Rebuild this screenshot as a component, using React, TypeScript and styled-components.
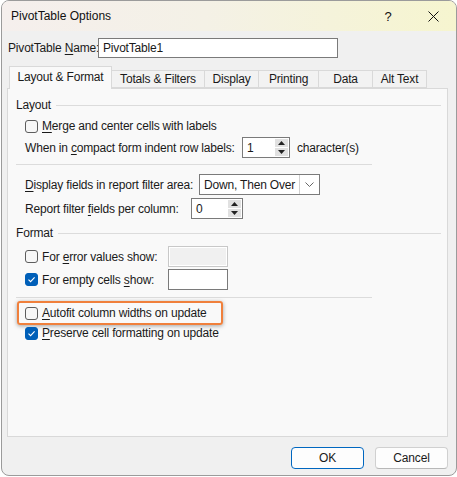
import styled, { createGlobalStyle } from "styled-components";

const GlobalStyle = createGlobalStyle`
  html, body {
    margin: 0;
    padding: 0;
    background: #ffffff;
  }
  body {
    font-family: "Liberation Sans", Arial, sans-serif;
    font-size: 12px;
    letter-spacing: -0.18px;
    color: #1a1a1a;
  }
`;

const Window = styled.div`
  width: 454px;
  height: 474px;
  margin-left: 1px;
  border: 1px solid #9b9b9b;
  border-radius: 8px;
  overflow: hidden;
  background: #f0f0f0;
  display: flex;
  flex-direction: column;
`;

const TitleBar = styled.div`
  height: 30px;
  flex-shrink: 0;
  display: flex;
  align-items: center;
  padding-left: 9px;
  background: linear-gradient(90deg, #f5efed 0%, #f4f1e6 45%, #f6f5cf 100%);

  .title {
    flex: 1;
    font-size: 12px;
    letter-spacing: 0;
    color: #111;
  }
`;

const TitleButton = styled.div<{ $w: number }>`
  width: ${(p) => p.$w}px;
  height: 30px;
  display: flex;
  align-items: center;
  justify-content: center;
  font-size: 13px;
  color: #111;
`;

const Body = styled.div`
  flex: 1;
  display: flex;
  flex-direction: column;
  padding: 0 8px 8px 5px;
`;

const NameRow = styled.div`
  display: flex;
  align-items: center;
  gap: 2px;
  height: 20px;
  margin-top: 7px;
  padding-left: 1px;
`;

const TextBox = styled.div<{ $w: number; $h?: number; $disabled?: boolean }>`
  width: ${(p) => p.$w}px;
  height: ${(p) => p.$h ?? 20}px;
  box-sizing: border-box;
  flex-shrink: 0;
  border: 1px solid ${(p) => (p.$disabled ? "#c8c8c8" : "#7a7a7a")};
  background: ${(p) => (p.$disabled ? "#f0f0f0" : "#ffffff")};
  display: flex;
  align-items: center;
  padding-left: 4px;
  outline: ${(p) => (p.$disabled ? "1px solid #ffffff" : "none")};
  outline-offset: -2px;
`;

const TabStrip = styled.div`
  display: flex;
  align-items: flex-end;
  height: 22px;
  margin-top: 8px;
  padding-left: 2px;
  position: relative;
  z-index: 1;
`;

const Tab = styled.div<{ $w: number; $active?: boolean }>`
  width: ${(p) => p.$w}px;
  height: ${(p) => (p.$active ? 23 : 18)}px;
  box-sizing: border-box;
  white-space: nowrap;
  border: 1px solid #d9d9d9;
  border-bottom: ${(p) => (p.$active ? "none" : "1px solid #d9d9d9")};
  margin-left: ${(p) => (p.$active ? 0 : -1)}px;
  margin-bottom: ${(p) => (p.$active ? -1 : 0)}px;
  background: ${(p) => (p.$active ? "#f9f9f9" : "#f2f2f2")};
  display: flex;
  align-items: center;
  justify-content: center;
  padding-bottom: ${(p) => (p.$active ? 2 : 0)}px;
`;

const Panel = styled.div`
  height: 349px;
  flex-shrink: 0;
  box-sizing: border-box;
  border: 1px solid #d9d9d9;
  background: #f9f9f9;
  padding: 8px 0 0 8px;
  display: flex;
  flex-direction: column;
`;

const GroupHeader = styled.div<{ $top: number }>`
  display: flex;
  align-items: center;
  height: 16px;
  margin-top: ${(p) => p.$top}px;
  padding-right: 6px;
  gap: 5px;

  &::after {
    content: "";
    flex: 1;
    height: 1px;
    background: #dcdcdc;
  }
`;

const Separator = styled.div<{ $top: number }>`
  width: 356px;
  height: 1px;
  flex-shrink: 0;
  background: #dcdcdc;
  margin-top: ${(p) => p.$top}px;
`;

const Row = styled.div<{ $top: number; $h?: number }>`
  display: flex;
  align-items: center;
  height: ${(p) => p.$h ?? 21}px;
  flex-shrink: 0;
  margin-top: ${(p) => p.$top}px;
  padding-left: 9px;
  white-space: nowrap;
`;

const Label = styled.span<{ $w?: number; $gap?: number }>`
  display: inline-block;
  white-space: nowrap;
  flex-shrink: 0;
  width: ${(p) => (p.$w ? `${p.$w}px` : "auto")};
  margin-left: ${(p) => p.$gap ?? 0}px;

  u {
    text-decoration: underline;
    text-underline-offset: 2px;
  }
`;

const Box = styled.span<{ $checked?: boolean }>`
  width: 13px;
  height: 13px;
  box-sizing: border-box;
  border-radius: 3px;
  border: 1px solid ${(p) => (p.$checked ? "#005fb8" : "#5d5d5d")};
  background: ${(p) => (p.$checked ? "#005fb8" : "#f7f7f7")};
  display: inline-flex;
  align-items: center;
  justify-content: center;
  margin-right: 4px;
  flex-shrink: 0;
`;

const Highlight = styled.div`
  width: 206px;
  height: 24px;
  flex-shrink: 0;
  box-sizing: border-box;
  margin-top: 3px;
  margin-left: 1px;
  border: 2px solid #f0803c;
  border-radius: 3px;
  box-shadow: 0 1px 4px rgba(0, 0, 0, 0.35);
  display: flex;
  align-items: center;
  padding-left: 6px;
  white-space: nowrap;
`;

const NumberField = styled.div<{ $w: number }>`
  width: ${(p) => p.$w}px;
  height: 21px;
  flex-shrink: 0;
  box-sizing: border-box;
  border: 1px solid #7a7a7a;
  background: #ffffff;
  display: flex;
  align-items: stretch;

  .value {
    flex: 1;
    display: flex;
    align-items: center;
    padding-left: 4px;
  }
`;

const Spin = styled.div`
  width: 13px;
  display: flex;
  flex-direction: column;
  gap: 1px;
  padding: 1px 1px 1px 0;

  span {
    flex: 1;
    background: #e1e1e1;
    display: flex;
    align-items: center;
    justify-content: center;
  }
`;

const Select = styled.div`
  width: 121px;
  height: 21px;
  flex-shrink: 0;
  box-sizing: border-box;
  border: 1px solid #7a7a7a;
  background: #ffffff;
  display: flex;
  align-items: stretch;

  .value {
    flex: 1;
    display: flex;
    align-items: center;
    padding-left: 4px;
  }

  .arrow {
    width: 19px;
    border-left: 1px solid #d0d0d0;
    display: flex;
    align-items: center;
    justify-content: center;
  }
`;

const Footer = styled.div`
  display: flex;
  justify-content: flex-end;
  gap: 11px;
  margin-top: 10px;
`;

const Button = styled.div<{ $primary?: boolean }>`
  width: 73px;
  height: 22px;
  box-sizing: border-box;
  border-radius: 4px;
  border: 1px solid ${(p) => (p.$primary ? "#0067c0" : "#d0d0d0")};
  border-bottom-color: ${(p) => (p.$primary ? "#0067c0" : "#b8b8b8")};
  background: #fdfdfd;
  display: flex;
  align-items: center;
  justify-content: center;
`;

const Check = () => (
  <svg width="9" height="9" viewBox="0 0 9 9">
    <path d="M1.5 4.6 L3.6 6.6 L7.6 2.4" fill="none" stroke="#fff" strokeWidth="1.1" />
  </svg>
);

const Arrows = () => (
  <Spin>
    <span>
      <svg width="7" height="4" viewBox="0 0 7 4">
        <path d="M0 4 L3.5 0 L7 4 Z" fill="#222" />
      </svg>
    </span>
    <span>
      <svg width="7" height="4" viewBox="0 0 7 4">
        <path d="M0 0 L3.5 4 L7 0 Z" fill="#222" />
      </svg>
    </span>
  </Spin>
);

const tabs = [
  { name: "Totals & Filters", w: 94 },
  { name: "Display", w: 55 },
  { name: "Printing", w: 61 },
  { name: "Data", w: 55 },
  { name: "Alt Text", w: 55 },
];

export default function App() {
  return (
    <>
      <GlobalStyle />
      <Window>
        <TitleBar>
          <span className="title">PivotTable Options</span>
          <TitleButton $w={44}>?</TitleButton>
          <TitleButton $w={46}>
            <svg width="11" height="11" viewBox="0 0 11 11">
              <path d="M0.5 0.5 L10.5 10.5 M10.5 0.5 L0.5 10.5" stroke="#111" strokeWidth="1" />
            </svg>
          </TitleButton>
        </TitleBar>
        <Body>
          <NameRow>
            <Label $w={88}>
              PivotTable <u>N</u>ame:
            </Label>
            <TextBox $w={240}>PivotTable1</TextBox>
          </NameRow>

          <TabStrip>
            <Tab $w={103} $active>
              Layout &amp; Format
            </Tab>
            {tabs.map((t) => (
              <Tab key={t.name} $w={t.w}>
                {t.name}
              </Tab>
            ))}
          </TabStrip>

          <Panel>
            <GroupHeader $top={0}>Layout</GroupHeader>
            <Row $top={5} $h={16}>
              <Box />
              <Label>
                <u>M</u>erge and center cells with labels
              </Label>
            </Row>
            <Row $top={3}>
              <Label $w={217}>
                When in <u>c</u>ompact form indent row labels:
              </Label>
              <NumberField $w={48}>
                <span className="value">1</span>
                <Arrows />
              </NumberField>
              <Label $gap={7}>character(s)</Label>
            </Row>
            <Separator $top={6} />
            <Row $top={9}>
              <Label $w={174}>
                <u>D</u>isplay fields in report filter area:
              </Label>
              <Select>
                <span className="value">Down, Then Over</span>
                <span className="arrow">
                  <svg width="9" height="5" viewBox="0 0 9 5">
                    <path d="M0.5 0.5 L4.5 4.5 L8.5 0.5" fill="none" stroke="#666" strokeWidth="1" />
                  </svg>
                </span>
              </Select>
            </Row>
            <Row $top={3}>
              <Label $w={166}>
                Report filter <u>f</u>ields per column:
              </Label>
              <NumberField $w={52}>
                <span className="value">0</span>
                <Arrows />
              </NumberField>
            </Row>

            <GroupHeader $top={6}>Format</GroupHeader>
            <Row $top={5}>
              <Box />
              <Label $w={126}>
                For <u>e</u>rror values show:
              </Label>
              <TextBox $w={60} $h={21} $disabled />
            </Row>
            <Row $top={2}>
              <Box $checked>
                <Check />
              </Box>
              <Label $w={126}>
                For empty cells <u>s</u>how:
              </Label>
              <TextBox $w={60} $h={21} />
            </Row>
            <Separator $top={7} />
            <Highlight>
              <Box />
              <Label>
                <u>A</u>utofit column widths on update
              </Label>
            </Highlight>
            <Row $top={0} $h={16}>
              <Box $checked>
                <Check />
              </Box>
              <Label>
                <u>P</u>reserve cell formatting on update
              </Label>
            </Row>
          </Panel>

          <Footer>
            <Button $primary>OK</Button>
            <Button>Cancel</Button>
          </Footer>
        </Body>
      </Window>
    </>
  );
}
